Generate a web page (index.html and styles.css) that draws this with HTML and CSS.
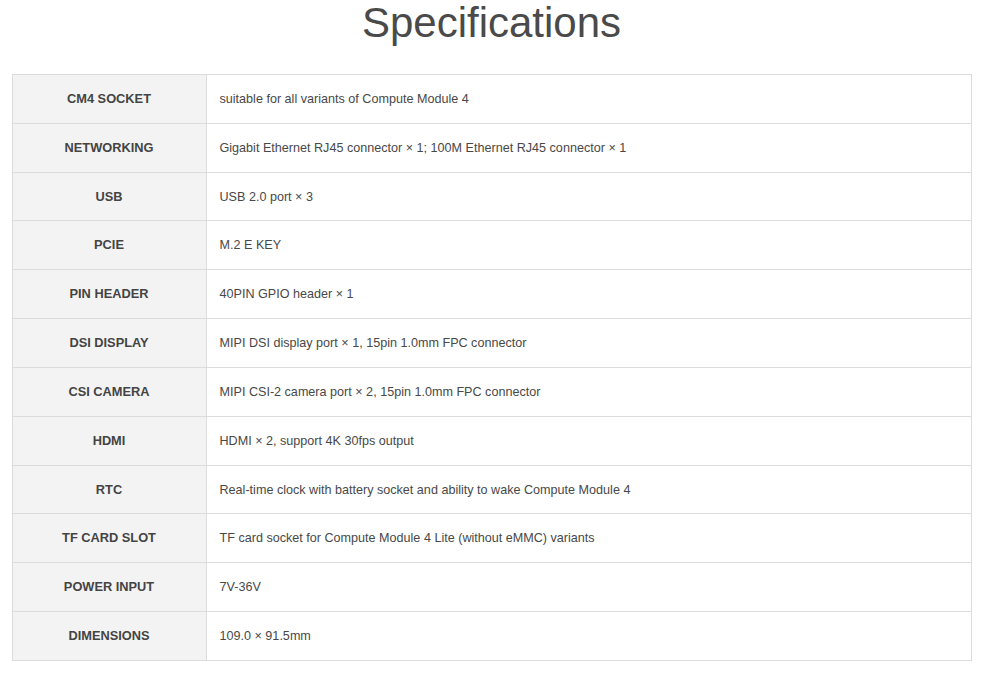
FILE: index.html
```html
<!DOCTYPE html>
<html>
<head>
<meta charset="utf-8">
<link rel="stylesheet" href="styles.css">
</head>
<body>
<div class="page">
  <h1 class="title">Specifications</h1>
  <table class="specs">
    <tr><th>CM4 SOCKET</th><td>suitable for all variants of Compute Module 4</td></tr>
    <tr><th>NETWORKING</th><td>Gigabit Ethernet RJ45 connector × 1; 100M Ethernet RJ45 connector × 1</td></tr>
    <tr><th>USB</th><td>USB 2.0 port × 3</td></tr>
    <tr><th>PCIE</th><td>M.2 E KEY</td></tr>
    <tr><th>PIN HEADER</th><td>40PIN GPIO header × 1</td></tr>
    <tr><th>DSI DISPLAY</th><td>MIPI DSI display port × 1, 15pin 1.0mm FPC connector</td></tr>
    <tr><th>CSI CAMERA</th><td>MIPI CSI-2 camera port × 2, 15pin 1.0mm FPC connector</td></tr>
    <tr><th>HDMI</th><td>HDMI × 2, support 4K 30fps output</td></tr>
    <tr><th>RTC</th><td>Real-time clock with battery socket and ability to wake Compute Module 4</td></tr>
    <tr><th>TF CARD SLOT</th><td>TF card socket for Compute Module 4 Lite (without eMMC) variants</td></tr>
    <tr><th>POWER INPUT</th><td>7V-36V</td></tr>
    <tr><th>DIMENSIONS</th><td>109.0 × 91.5mm</td></tr>
  </table>
</div>
</body>
</html>
```
FILE: styles.css
```css
html, body {
  margin: 0;
  padding: 0;
  background: #fff;
}
body {
  font-family: "Liberation Sans", Arial, sans-serif;
  color: #444;
}
.page {
  width: 960px;
  margin: 0 auto;
}
.title {
  margin: 0 0 28px 0;
  font-size: 42px;
  line-height: 46px;
  font-weight: normal;
  text-align: center;
  color: #4a4a4a;
}
.specs {
  width: 960px;
  border-collapse: collapse;
  font-size: 12.6px;
}
.specs th, .specs td {
  border: 1px solid #dcdcdc;
  height: 48.84px;
  padding: 0 13px;
  box-sizing: border-box;
  line-height: 18px;
}
.specs th {
  width: 194px;
  background: #f3f3f3;
  font-weight: bold;
  font-size: 12.8px;
  text-align: center;
  color: #444;
}
.specs td {
  text-align: left;
  color: #484848;
}
```
